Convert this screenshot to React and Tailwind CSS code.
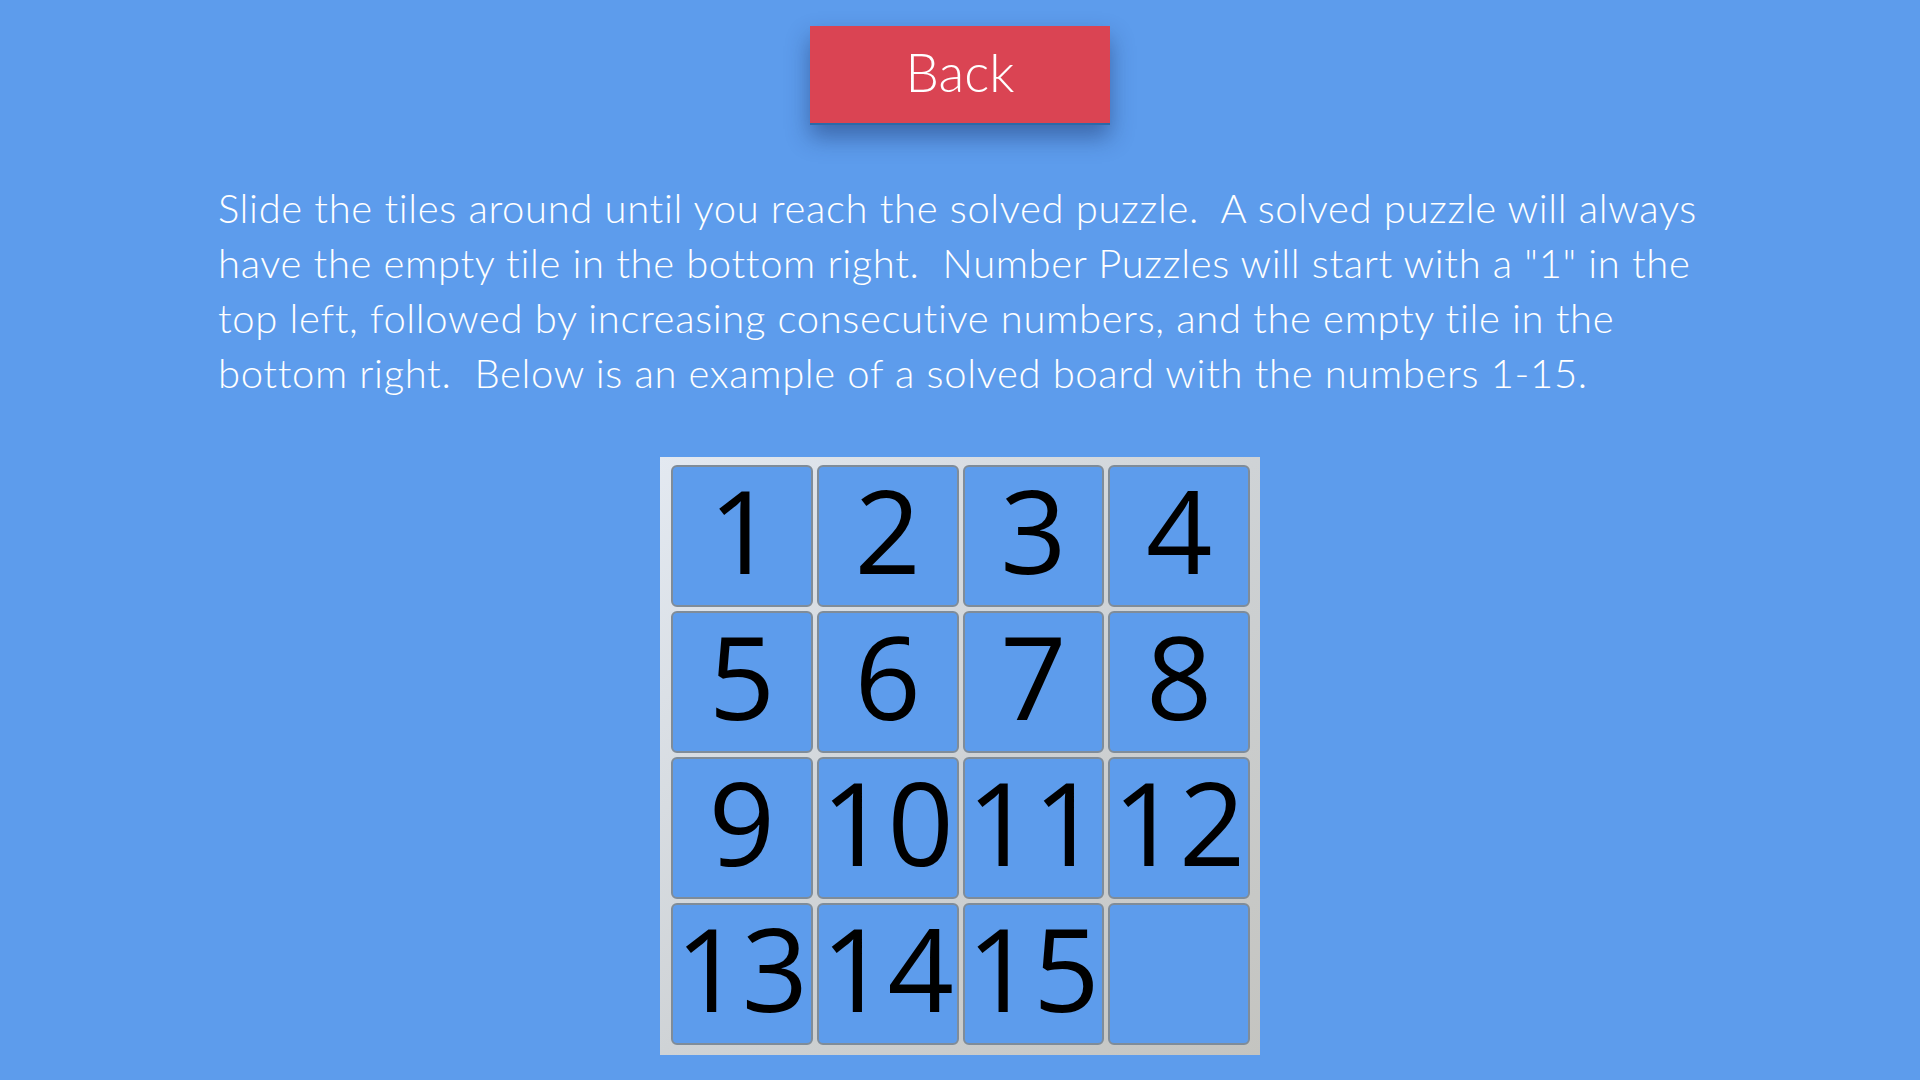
import React from "react";

const tiles = [1, 2, 3, 4, 5, 6, 7, 8, 9, 10, 11, 12, 13, 14, 15, null];

const Tile = ({ value }) => {
  return (
    <div className="h-[142px] flex items-center justify-center pb-[14px] bg-[#5d9cec] border-2 border-[#7f8c99] rounded-[6px] text-black text-[116px] leading-none font-[370] font-['Open_Sans',sans-serif] overflow-visible">
      {value}
    </div>
  );
};

export default function App() {
  return (
    <div className="min-h-screen w-full bg-[#5d9cec] flex flex-col items-center font-['Lato',sans-serif]">
      {/* back button */}
      <button className="mt-[26px] w-[300px] h-[99px] pb-[6px] bg-[#da4453] text-white text-[53px] font-light leading-none shadow-[0_12px_22px_rgba(20,40,90,0.45)] border-b-2 border-[#2b6aa8]">
        Back
      </button>

      {/* instructions */}
      <div className="w-[1484px] mt-[56px]">
        <p className="text-white text-[40px] leading-[55px] font-light tracking-[0.65px] whitespace-pre-wrap">
          Slide the tiles around until you reach the solved puzzle.  A solved puzzle will always have the empty tile in the bottom right.  Number Puzzles will start with a "1" in the top left, followed by increasing consecutive numbers, and the empty tile in the bottom right.  Below is an example of a solved board with the numbers 1-15.
        </p>
      </div>

      {/* example board */}
      <div className="mt-[56px] mb-[25px] w-[600px] pl-[11px] pr-[10px] pt-[8px] pb-[10px] bg-[linear-gradient(135deg,#e3e9f1_0%,#cfd3d6_50%,#c4c4c0_100%)]">
        <div className="grid grid-cols-4 gap-[4px]">
          {tiles.map((t, i) => (
            <Tile key={i} value={t} />
          ))}
        </div>
      </div>
    </div>
  );
}
